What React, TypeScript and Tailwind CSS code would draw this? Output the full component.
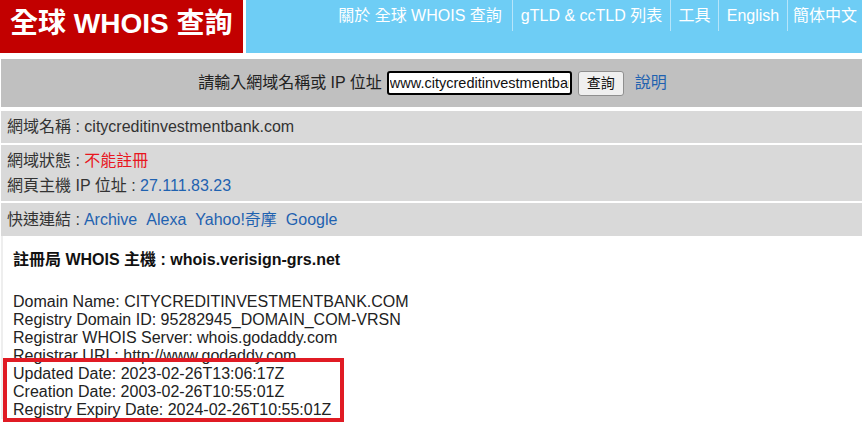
import React from 'react';

const navItems = [
  { label: '關於 全球 WHOIS 查詢', w: 'w-[184px]', first: true },
  { label: 'gTLD & ccTLD 列表', w: 'w-[158px]' },
  { label: '工具', w: 'w-[48px]' },
  { label: 'English', w: 'w-[69px]' },
  { label: '簡体中文', w: 'w-[75px]' },
];

const whoisLines = [
  'Domain Name: CITYCREDITINVESTMENTBANK.COM',
  'Registry Domain ID: 95282945_DOMAIN_COM-VRSN',
  'Registrar WHOIS Server: whois.godaddy.com',
  'Registrar URL: http://www.godaddy.com',
  'Updated Date: 2023-02-26T13:06:17Z',
  'Creation Date: 2003-02-26T10:55:01Z',
  'Registry Expiry Date: 2024-02-26T10:55:01Z',
];

const quickLinks = ['Archive', 'Alexa', 'Yahoo!奇摩', 'Google'];

const App: React.FC = () => {
  return (
    <div className="relative w-[864px] h-[428px] overflow-hidden bg-white text-[#333] font-['Liberation_Sans','Noto_Sans_CJK_TC',sans-serif]">
      {/* 頁首 */}
      <div className="flex h-[53px] w-[862px]">
        <div className="w-[243px] bg-[#c20000] flex items-start pl-[10px] pt-[7px]">
          <span className="text-white font-bold text-[28px] leading-[34px]">全球 WHOIS 查詢</span>
        </div>
        <div className="w-[3px]" />
        <div className="flex-1 bg-[#6ecdf5] flex justify-end items-start">
          {navItems.map((item) => (
            <div
              key={item.label}
              className={`${item.w} h-[31px] flex items-center justify-center pt-[1px] text-white text-[16px] ${
                item.first ? '' : 'border-l border-[#b6e5fa]'
              }`}
            >
              {item.label}
            </div>
          ))}
        </div>
      </div>

      {/* 搜尋列 */}
      <div className="ml-[1px] w-[861px] mt-[6px] h-[48px] bg-[#c0c0c0] flex items-center justify-center pl-[2px]">
        <span className="text-[16px] text-[#222] mr-[5px]">請輸入網域名稱或 IP 位址</span>
        <input
          readOnly
          value="www.citycreditinvestmentbank.com"
          className="w-[185px] h-[24px] border-2 border-black rounded-[3px] bg-white px-[1px] text-[14.5px] text-[#111] outline-none font-['Liberation_Sans',sans-serif]"
        />
        <button className="ml-[6px] w-[46px] h-[25px] bg-[#efefef] border border-[#8f8f8f] rounded-[3px] text-[14px] text-[#111] flex items-center justify-center">
          查詢
        </button>
        <a className="ml-[11px] text-[16px] text-[#1f62b0]">說明</a>
      </div>

      {/* 網域資訊 */}
      <div className="ml-[1px] w-[861px] mt-[4px] flex flex-col gap-[2px]">
        <div className="h-[32px] bg-[#d9d9d9] flex items-center pl-[6px] text-[16px]">
          網域名稱 : citycreditinvestmentbank.com
        </div>
        <div className="h-[56px] bg-[#d9d9d9] flex flex-col justify-center pl-[6px] text-[16px] leading-[25px]">
          <div>
            網域狀態 : <span className="text-[#e8161e]">不能註冊</span>
          </div>
          <div>
            網頁主機 IP 位址 : <span className="text-[#1f62b0]">27.111.83.23</span>
          </div>
        </div>
        <div className="h-[33px] bg-[#d9d9d9] flex items-center pl-[6px] text-[16px]">
          <span>快速連結 :</span>
          {quickLinks.map((l, i) => (
            <a key={l} className={`${i === 0 ? 'ml-[4px]' : 'ml-[9px]'} text-[#1f62b0]`}>
              {l}
            </a>
          ))}
        </div>
      </div>

      {/* WHOIS 內容 */}
      <div className="ml-[1px] border-l-2 border-[#eeeeee] pl-[10px] pt-[14px]">
        <div className="font-bold text-[16px] text-[#111] leading-[20px]">
          註冊局 WHOIS 主機 : whois.verisign-grs.net
        </div>
        <div className="mt-[23px] text-[16px] leading-[18px] text-[#222]">
          {whoisLines.map((line) => (
            <div key={line} className="whitespace-nowrap">
              {line}
            </div>
          ))}
        </div>
      </div>

      {/* 標示框 */}
      <div className="absolute left-[3px] top-[358px] w-[341px] h-[64px] border-[4px] border-[#e01b24]" />
    </div>
  );
};

export default App;
